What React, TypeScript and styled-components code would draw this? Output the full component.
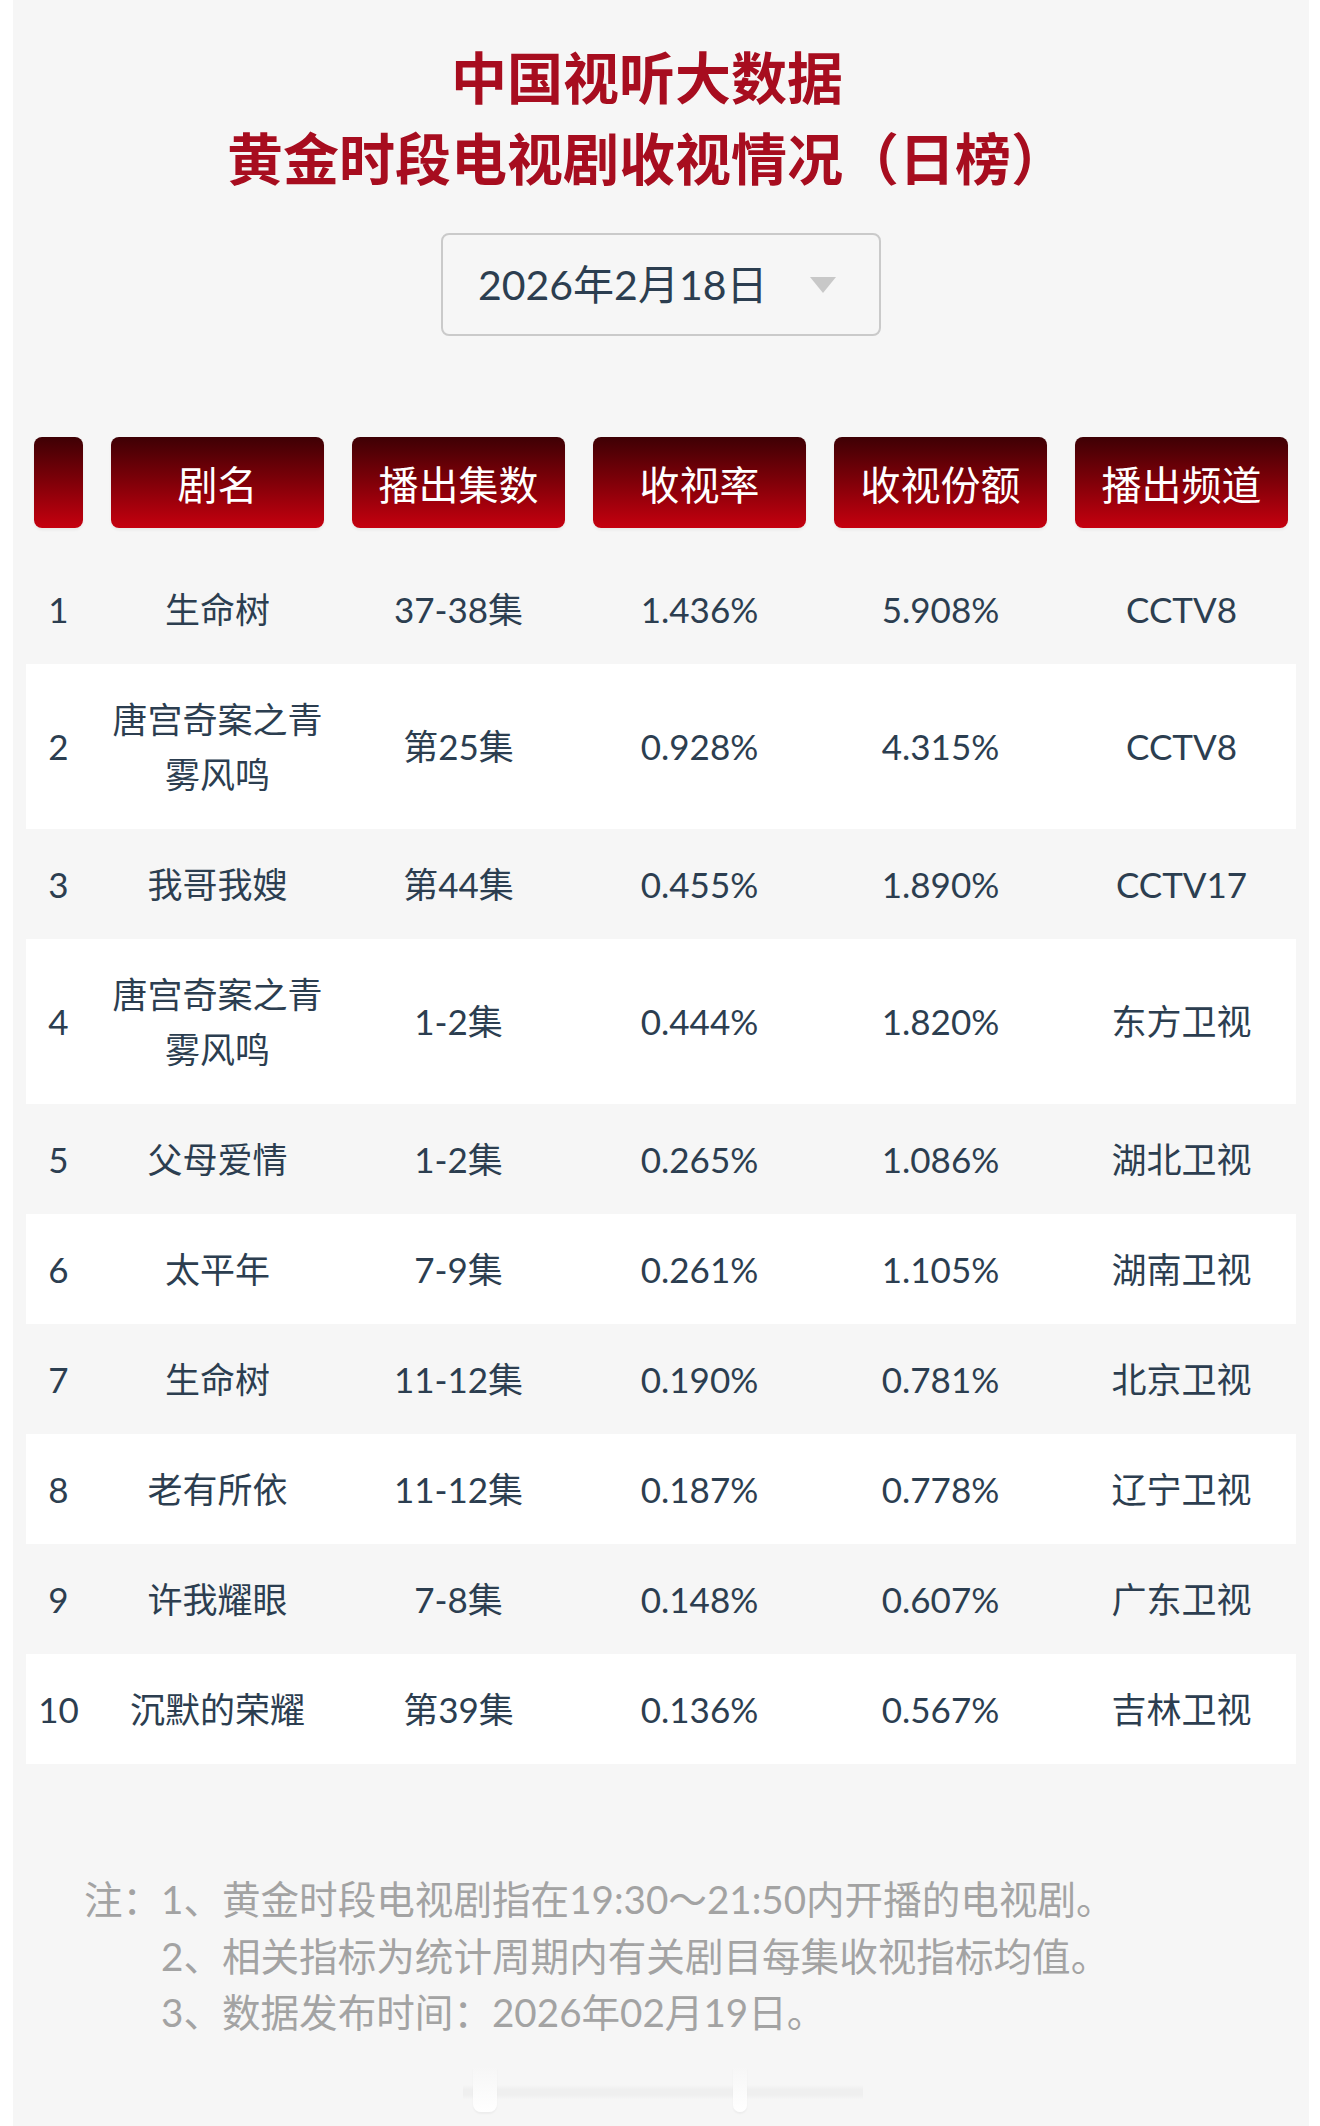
import React from "react";
import styled, { createGlobalStyle } from "styled-components";

const GlobalStyle = createGlobalStyle`
  html, body { margin: 0; padding: 0; background: #ffffff; }
  body { font-family: Lato, "Noto Sans CJK SC", sans-serif; }
  * { box-sizing: border-box; }
`;

const Page = styled.div`
  padding: 0 13px;
  min-height: 2126px;
  display: flex;
`;

const Card = styled.main`
  flex: 1;
  background: #f6f6f6;
  padding: 34px 13px 0;
  display: flex;
  flex-direction: column;
`;

const Title = styled.h1`
  margin: 0;
  padding-right: 28px;
  text-align: center;
  font: 700 56px/81px "Noto Sans CJK SC", sans-serif;
  color: #a70d1f;
`;

const DateSelect = styled.div`
  align-self: center;
  margin-top: 37px;
  width: 440px;
  height: 103px;
  border: 2px solid #cacaca;
  border-radius: 8px;
  display: flex;
  align-items: center;
  justify-content: space-between;
  padding: 0 43px 0 35px;
  font: 400 41px/1 Lato, "Noto Sans CJK SC", sans-serif;
  color: #2c3e50;
`;

const Caret = styled.span`
  width: 0;
  height: 0;
  border-left: 13px solid transparent;
  border-right: 13px solid transparent;
  border-top: 16px solid #c8c8c8;
`;

const Table = styled.section`
  margin-top: 101px;
  display: flex;
  flex-direction: column;
`;

const GridRow = styled.div`
  display: grid;
  grid-template-columns: 49px repeat(5, 213px);
  column-gap: 28px;
  padding: 0 8px;
`;

const HeaderRow = styled(GridRow)`
  margin-bottom: 26px;
`;

const HeaderCell = styled.div`
  height: 91px;
  border-radius: 8px;
  background: linear-gradient(to bottom, #3e0004 0%, #7a0008 45%, #c6000f 100%);
  box-shadow: 0 2px 3px rgba(0, 0, 0, 0.06);
  color: #ffffff;
  display: flex;
  align-items: center;
  justify-content: center;
  font: 400 40px/1 "Noto Sans CJK SC", sans-serif;
`;

const DataRow = styled(GridRow)<{ $striped: boolean }>`
  padding-top: 27.5px;
  padding-bottom: 27.5px;
  align-items: center;
  background: ${(p) => (p.$striped ? "#ffffff" : "transparent")};
  color: #2c3e50;
  font: 400 35px/55px Lato, "Noto Sans CJK SC", sans-serif;
`;

const Cell = styled.div`
  text-align: center;
  white-space: pre-line;
`;

const Notes = styled.section`
  margin-top: 107px;
  padding-left: 58px;
  display: grid;
  grid-template-columns: 77px 1fr;
  color: #a3a3a3;
  font: 400 38.6px/56.5px Lato, "Noto Sans CJK SC", sans-serif;
`;

const NoteLabel = styled.div``;
const NoteText = styled.div`
  grid-column: 2;
`;

const Scrubber = styled.div`
  margin: 26px 0 0 437px;
  width: 400px;
  height: 45px;
  display: flex;
  align-items: center;
  gap: 236px;
  padding-left: 10px;
  background: linear-gradient(to bottom, transparent 40%, #efefef 50%, #efefef 62%, transparent 72%);
`;

const Pill = styled.span<{ $w: number }>`
  width: ${(p) => p.$w}px;
  height: 45px;
  border-radius: 0 0 8px 8px;
  background: linear-gradient(to bottom, #f6f6f6, #ffffff);
  box-shadow: 0 2px 2px rgba(0, 0, 0, 0.04);
`;

const headers = ["", "剧名", "播出集数", "收视率", "收视份额", "播出频道"];

const rows: string[][] = [
  ["1", "生命树", "37-38集", "1.436%", "5.908%", "CCTV8"],
  ["2", "唐宫奇案之青\n雾风鸣", "第25集", "0.928%", "4.315%", "CCTV8"],
  ["3", "我哥我嫂", "第44集", "0.455%", "1.890%", "CCTV17"],
  ["4", "唐宫奇案之青\n雾风鸣", "1-2集", "0.444%", "1.820%", "东方卫视"],
  ["5", "父母爱情", "1-2集", "0.265%", "1.086%", "湖北卫视"],
  ["6", "太平年", "7-9集", "0.261%", "1.105%", "湖南卫视"],
  ["7", "生命树", "11-12集", "0.190%", "0.781%", "北京卫视"],
  ["8", "老有所依", "11-12集", "0.187%", "0.778%", "辽宁卫视"],
  ["9", "许我耀眼", "7-8集", "0.148%", "0.607%", "广东卫视"],
  ["10", "沉默的荣耀", "第39集", "0.136%", "0.567%", "吉林卫视"],
];

export default function App() {
  return (
    <>
      <GlobalStyle />
      <Page>
        <Card>
          <Title>
            中国视听大数据
            <br />
            黄金时段电视剧收视情况（日榜）
          </Title>
          <DateSelect>
            <span>2026年2月18日</span>
            <Caret />
          </DateSelect>
          <Table>
            <HeaderRow>
              {headers.map((h, i) => (
                <HeaderCell key={i}>{h}</HeaderCell>
              ))}
            </HeaderRow>
            {rows.map((r, i) => (
              <DataRow key={i} $striped={i % 2 === 1}>
                {r.map((c, j) => (
                  <Cell key={j}>{c}</Cell>
                ))}
              </DataRow>
            ))}
          </Table>
          <Notes>
            <NoteLabel>注：</NoteLabel>
            <NoteText>1、黄金时段电视剧指在19:30～21:50内开播的电视剧。</NoteText>
            <NoteText>2、相关指标为统计周期内有关剧目每集收视指标均值。</NoteText>
            <NoteText>3、数据发布时间：2026年02月19日。</NoteText>
          </Notes>
          <Scrubber>
            <Pill $w={24} />
            <Pill $w={14} />
          </Scrubber>
        </Card>
      </Page>
    </>
  );
}
